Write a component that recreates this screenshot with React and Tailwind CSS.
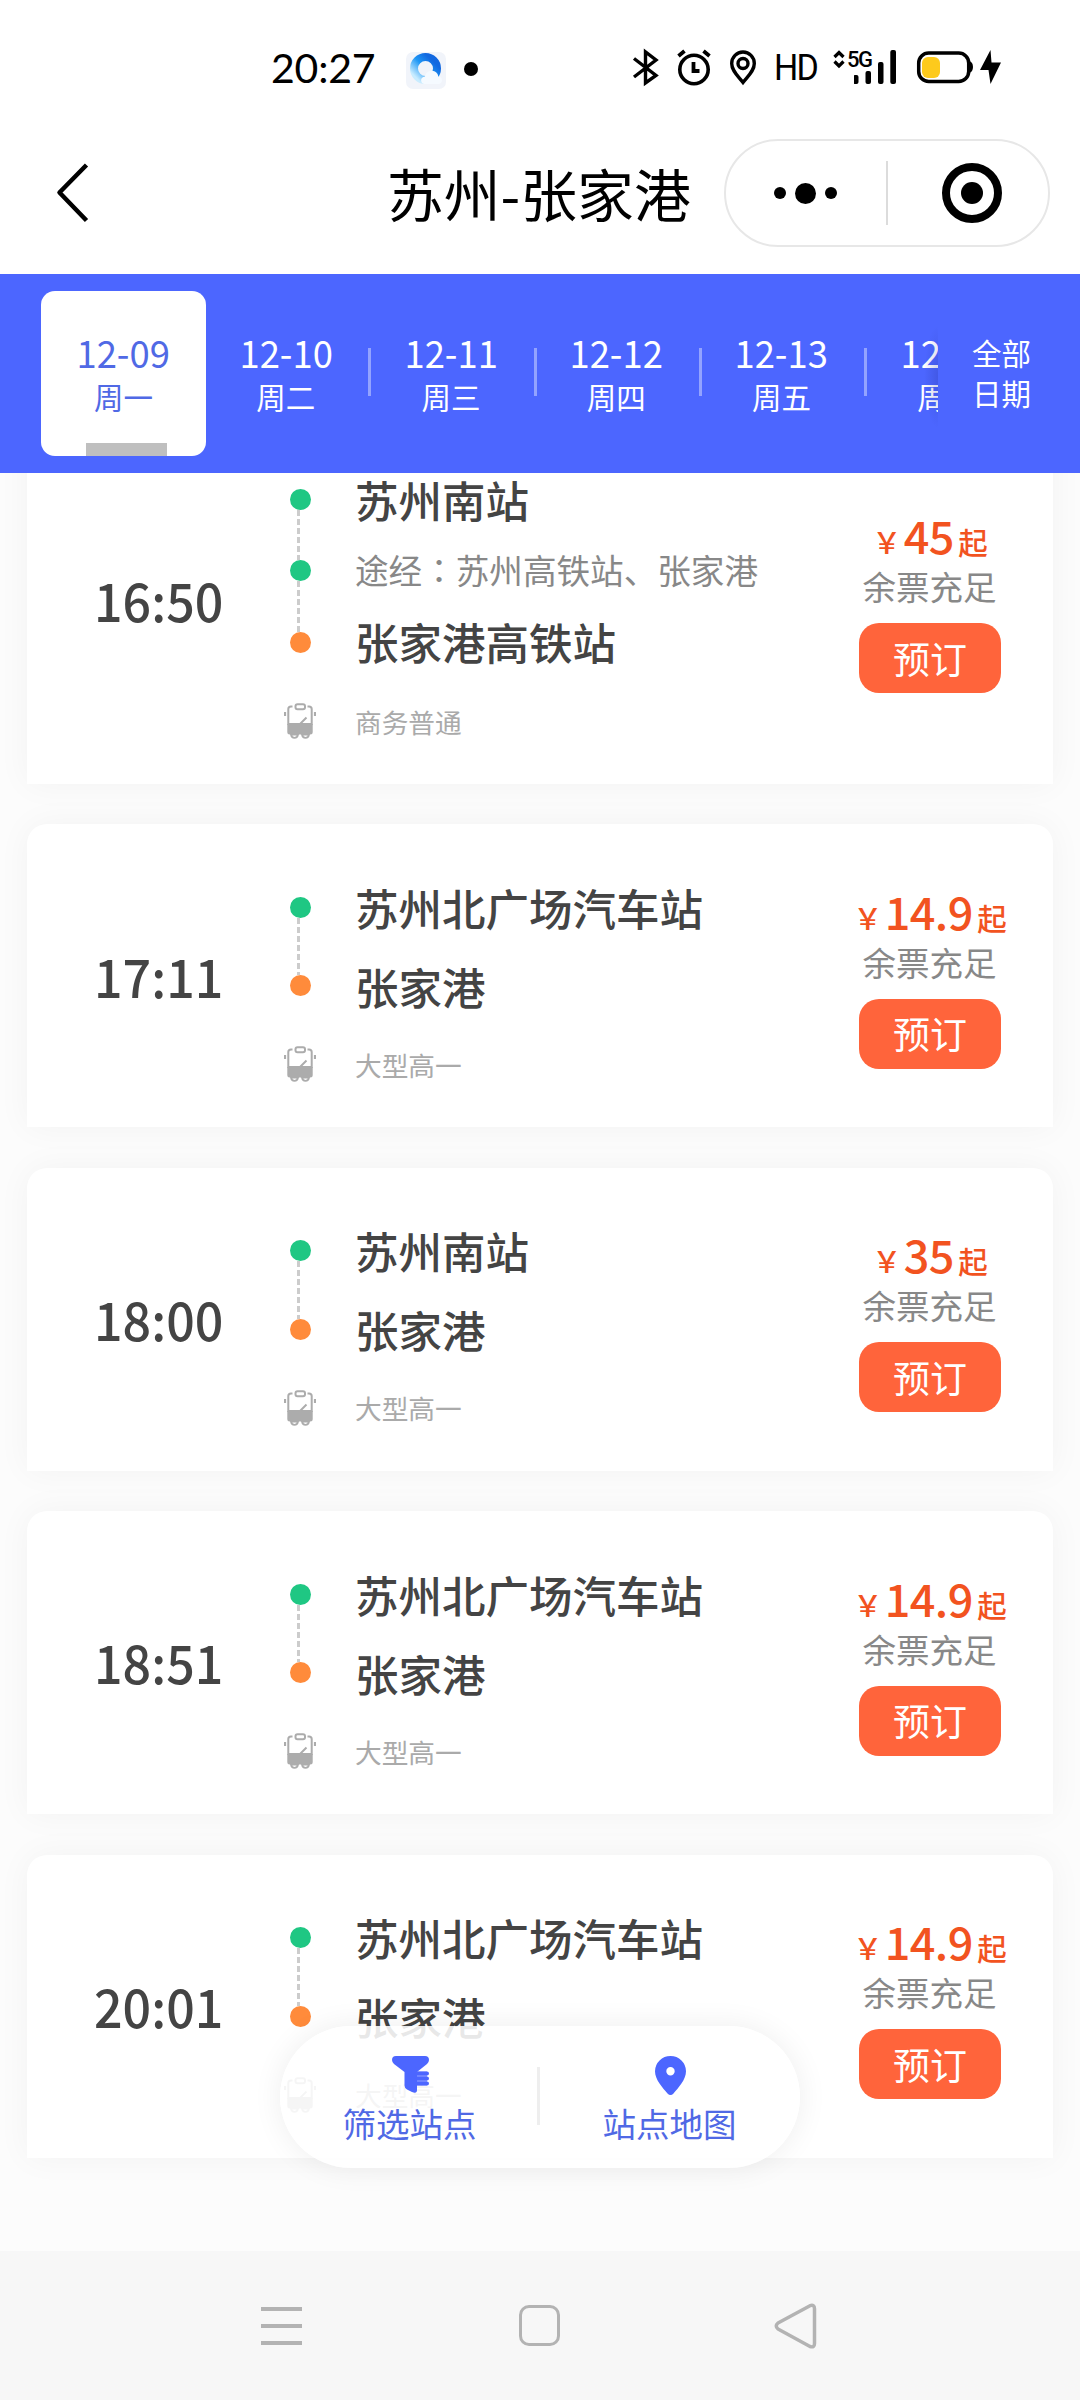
const DATES = [
  ['12-10', '周二'],
  ['12-11', '周三'],
  ['12-12', '周四'],
  ['12-13', '周五'],
  ['12-14', '周六'],
];

const TRIPS = [
  { time: '16:50', from: '苏州南站', via: '苏州高铁站、张家港', to: '张家港高铁站', type: '商务普通', price: '45' },
  { time: '17:11', from: '苏州北广场汽车站', to: '张家港', type: '大型高一', price: '14.9' },
  { time: '18:00', from: '苏州南站', to: '张家港', type: '大型高一', price: '35' },
  { time: '18:51', from: '苏州北广场汽车站', to: '张家港', type: '大型高一', price: '14.9' },
  { time: '20:01', from: '苏州北广场汽车站', to: '张家港', type: '大型高一', price: '14.9' },
];

function StatusBar() {
  return (
    <div className="flex h-[136px] shrink-0 items-center pl-[271px]">
      <span className="w-[105px] whitespace-nowrap font-['Lato'] text-[41px] leading-[48px] tracking-[-0.2px] text-black">20:27</span>
      <svg className="ml-[30px] mt-[4px]" width="40" height="37" viewBox="0 0 40 37">
        <defs>
          <linearGradient id="ring" x1="1" y1="0" x2="0.1" y2="0.9">
            <stop offset="0.2" stopColor="#1268e0" />
            <stop offset="0.55" stopColor="#1e97f5" />
            <stop offset="1" stopColor="#c8ecff" />
          </linearGradient>
        </defs>
        <rect width="40" height="37" rx="7" fill="#f1f4fa" />
        <circle cx="19.500" cy="16.500" r="11.500" fill="none" stroke="url(#ring)" strokeWidth="8" />
        <path d="M18 32c-4-1-4-7 1-7.500 1-6 9-8 12.500-2.500.5 1 .7 1.500.7 2.500 5 0 5 7.500 0 7.500z" fill="#f5faff" />
      </svg>
      <span className="ml-[18px] mt-[1px] h-[14px] w-[14px] rounded-full bg-black" />
      <svg className="ml-[154px]" width="28" height="40" viewBox="0 0 28 40" fill="none" stroke="#000" strokeWidth="3.400">
        <path d="M2 10.500 24 27.500 13.500 35V4L24 12 2 29" />
      </svg>
      <svg className="ml-[17px]" width="34" height="40" viewBox="0 0 34 40" fill="none" stroke="#000">
        <circle cx="17" cy="21.500" r="14.200" strokeWidth="3.600" />
        <path d="M1.500 8 7.500 3M26.500 3l6 5" strokeWidth="3.800" />
        <path d="M16.500 14v9h6" strokeWidth="3.800" />
      </svg>
      <svg className="ml-[18px]" width="28" height="40" viewBox="0 0 28 40" fill="none" stroke="#000" strokeWidth="3.400">
        <path d="M14 34.500C9 28 2.700 23 2.700 15.500a11.300 11.500 0 0 1 22.600 0C25.300 23 19 28 14 34.500z" />
        <circle cx="14" cy="15.500" r="5" />
      </svg>
      <span className="ml-[17px] w-[50px] origin-left scale-x-[.92] font-['Roboto'] text-[37px] leading-[40px] tracking-[-2px] text-black">HD</span>
      <svg className="ml-[9px]" width="12" height="40" viewBox="0 0 12 40" fill="none" stroke="#000" strokeWidth="3.200">
        <path d="M1.500 9 6 4.500 10.500 9M1.500 13.500 6 18l4.500-4.500" />
      </svg>
      <div className="relative ml-[9px] h-[40px] w-[44px]">
        <span className="absolute -left-[7px] top-[1px] font-['Roboto'] text-[22px] font-medium leading-[22px] tracking-[-1.500px] text-black">5G</span>
        <svg width="44" height="40" viewBox="0 0 44 40">
          <rect x="-1" y="27" width="5.500" height="9" rx="2" />
          <rect x="11.500" y="23" width="5.500" height="13" rx="2" />
          <rect x="24" y="14" width="5.500" height="22" rx="2" />
          <rect x="36.300" y="2" width="5.700" height="34" rx="2" />
        </svg>
      </div>
      <svg className="ml-[17px]" width="60" height="40" viewBox="0 0 60 40">
        <rect x="3.700" y="5" width="50" height="28.500" rx="10" fill="none" stroke="#000" strokeWidth="3.500" />
        <rect x="7" y="9" width="18" height="21" rx="6" fill="#fdca1c" />
        <path d="M54 13q4 1 4 6t-4 6z" />
      </svg>
      <svg className="ml-[4px]" width="22" height="40" viewBox="0 0 22 40">
        <path d="M11.500 2 1 22h8.500l2 14L22 14.500h-9.500z" />
      </svg>
    </div>
  );
}

function TitleBar() {
  return (
    <div className="flex h-[138px] shrink-0 items-start pt-[3px]">
      <svg className="ml-[54px] mt-[22px]" width="38" height="64" viewBox="0 0 38 64" fill="none" stroke="#000" strokeWidth="4.500">
        <path d="M32.500 4 5.500 31.500l27 28" strokeLinejoin="round" />
      </svg>
      <h1 className="ml-[295px] mt-[13px] w-[337px] whitespace-nowrap text-[56.8px] leading-[80px] text-black">苏州-张家港</h1>
      <div className="flex h-[108px] w-[326px] items-center rounded-full border-2 border-[#e7e7e7]">
        <div className="flex w-[160px] items-center justify-center gap-[9px] pr-[2px]">
          <span className="h-[12px] w-[12px] rounded-full bg-black" />
          <span className="h-[21px] w-[21px] rounded-full bg-black" />
          <span className="h-[12px] w-[12px] rounded-full bg-black" />
        </div>
        <span className="h-[64px] w-[2px] bg-[#dcdcdc]" />
        <div className="flex flex-1 items-center justify-center pl-[7px]">
          <span className="flex h-[60px] w-[60px] items-center justify-center rounded-full border-[8px] border-black">
            <span className="h-[22px] w-[22px] rounded-full bg-black" />
          </span>
        </div>
      </div>
    </div>
  );
}

function DateBar() {
  return (
    <div className="flex h-[199px] shrink-0 items-center bg-[#4c66ff] pl-[41px] text-white">
      <div className="flex h-[165px] w-[897px] overflow-hidden">
        <div className="relative flex w-[165px] shrink-0 flex-col items-center rounded-[14px] bg-white pt-[36px] text-[#5069e5]">
          <span className="scale-x-[.97] text-[37.5px] leading-[49px]">12-09</span>
          <span className="text-[29.5px] leading-[40px]">周一</span>
          <span className="absolute bottom-0 left-[45px] h-[13px] w-[81px] bg-[#bfbfbf]" />
        </div>
        {DATES.map(([date, day]) => (
          <div key={date} className="flex w-[165.3px] shrink-0 items-center">
            <div className="flex h-full flex-1 flex-col items-center pr-[3px] pt-[36px]">
              <span className="scale-x-[.97] text-[37.5px] leading-[49px]">{date}</span>
              <span className="text-[29.5px] leading-[40px]">{day}</span>
            </div>
            <span className="-mt-[4px] h-[48px] w-[3px] bg-white/40" />
          </div>
        ))}
      </div>
      <div className="relative flex-1">
        <span className="absolute -left-[14px] top-[-10px] h-[104px] w-[14px] bg-[radial-gradient(ellipse_at_right,rgba(30,40,140,0.22),transparent_70%)]" />
        <div className="-mt-[3px] pl-[34px] text-[29.5px] leading-[40px]">
          <div>全部</div>
          <div>日期</div>
        </div>
      </div>
    </div>
  );
}

function BusIcon() {
  return (
    <svg className="shrink-0" width="32" height="36" viewBox="0 0 32 36" fill="none" stroke="#acacac" strokeWidth="2">
      <path d="M8.500 3.500H7Q4.300 3.500 4.300 6v15h23.400V6q0-2.500-2.700-2.500h-1.500" />
      <rect x="11.500" y="1.200" width="9.500" height="5" rx="2" />
      <path d="M1 9v4M31 9v4" strokeWidth="2.200" />
      <path d="m16 21 6.500-6.500" />
      <path d="M3.300 21h25.400v8q0 2.500-2.500 2.500H5.800q-2.500 0-2.500-2.500z" fill="#acacac" stroke="none" />
      <path d="M7 31.500q.5 3.300 3.500 3.300t3.500-3.300zM18 31.500q.5 3.300 3.500 3.300t3.500-3.300z" fill="#fff" strokeWidth="1.800" />
    </svg>
  );
}

const dash = 'bg-[repeating-linear-gradient(to_bottom,#ccc_0_6px,transparent_6px_9px)]';

function Timeline({ via }) {
  return (
    <div className="flex w-[36px] shrink-0 flex-col items-center pt-[72.5px]">
      <span className="h-[21px] w-[21px] shrink-0 rounded-full bg-[#1fc783]" />
      <span className={'mr-[4px] w-[3px] shrink-0 ' + dash + (via ? ' h-[50.5px]' : ' h-[57.5px]')} />
      {via && <span className="h-[21px] w-[21px] shrink-0 rounded-full bg-[#1fc783]" />}
      {via && <span className={'mr-[4px] h-[50.5px] w-[3px] shrink-0 ' + dash} />}
      <span className="mb-[50px] h-[21px] w-[21px] shrink-0 rounded-full bg-[#ff8b3b]" />
      <BusIcon />
    </div>
  );
}

function TripCard({ trip }) {
  const rowHeight = trip.via ? 'h-[71px]' : 'h-[79px]';
  const row = 'flex items-center whitespace-nowrap ' + rowHeight;
  return (
    <div className={'flex w-full shrink-0 rounded-t-[20px] bg-white shadow-[0_0_34px_rgba(0,0,0,0.045)] ' + (trip.via ? 'h-[368px]' : 'h-[303px]')}>
      <div className="flex w-[255px] items-center justify-center pb-[2px] pl-[8px] text-[52.5px] font-medium text-[#444]">
        <span className="scale-x-[.955]">{trip.time}</span>
      </div>
      <Timeline via={trip.via} />
      <div className={'flex flex-1 flex-col pl-[37px] ' + (trip.via ? 'pt-[48px]' : 'pt-[43.5px]')}>
        <div className={row + ' text-[43.5px] font-medium text-[#444]'}>{trip.from}</div>
        {trip.via && (
          <div className={row + ' text-[33.6px] text-[#888]'}>
            途经<span className="font-['Noto_Sans_CJK_JP']">：</span>
            {trip.via}
          </div>
        )}
        <div className={row + ' text-[43.5px] font-medium text-[#444]'}>{trip.to}</div>
        <div className={'flex h-[76px] items-center text-[26.7px] text-[#aaa] ' + (trip.via ? 'mt-[7px]' : 'mt-[1px]')}>{trip.type}</div>
      </div>
      <div className="flex w-[246px] shrink-0 flex-col items-center justify-center pt-[1px]">
        <div className="flex h-[54px] items-baseline whitespace-nowrap font-medium leading-[54px] text-[#f2531f]">
          <span className="text-[29px]">￥</span>
          <span className="mx-[2.5px] text-[45px] leading-[54px] tracking-[-0.6px]">{trip.price}</span>
          <span className="ml-[2px] text-[29.5px]">起</span>
        </div>
        <div className="-ml-[1px] text-[33.5px] leading-[48px] text-[#888]">余票充足</div>
        <button className="mt-[13px] h-[70px] w-[142px] rounded-[20px] bg-[#ff643b] text-[37px] leading-[67px] text-white">预订</button>
      </div>
    </div>
  );
}

function FloatingActions() {
  return (
    <div className="absolute left-[280px] top-[2026px] flex h-[142px] w-[520px] items-center rounded-full bg-white/[.88] text-[33.5px] leading-[46px] text-[#5069e5] shadow-[0_0_30px_rgba(0,0,0,0.07)]">
      <div className="flex flex-1 flex-col items-center pt-[7px]">
        <svg className="mb-[6px] ml-[2px]" width="38" height="38" viewBox="0 0 38 38" fill="#4c66ff">
          <path d="M4 0h29q4 0 4 4 0 2-2 4L25 16v18q0 4-5 2l-5-2.500q-2.500-1.500-2.500-4V16L2 8Q0 6 0 4 0 0 4 0z" />
          <rect x="23" y="15.500" width="14" height="4" rx="2" />
          <rect x="23" y="20.500" width="14" height="4" rx="2" />
          <rect x="23" y="25.500" width="14" height="4" rx="2" />
          <path d="M25 15.500h10v14H25z" fillOpacity=".6" />
        </svg>
        <span>筛选站点</span>
      </div>
      <span className="-mt-[3px] -ml-[2px] h-[58px] w-[3px] bg-[#eee]" />
      <div className="flex flex-1 flex-col items-center pr-[1px] pt-[7px]">
        <svg className="mb-[5px] ml-[2px]" width="31" height="39" viewBox="0 0 31 39" fill="#4c66ff">
          <path fillRule="evenodd" d="M15.500 0A15.500 15.300 0 0 0 0 15.300C0 24 8 32 12.500 37.500q3 3 6 0C23 32 31 24 31 15.300A15.500 15.300 0 0 0 15.500 0zm0 11a4.200 4.200 0 1 1 0 8.400 4.200 4.200 0 0 1 0-8.400z" />
        </svg>
        <span>站点地图</span>
      </div>
    </div>
  );
}

function NavBar() {
  return (
    <div className="flex h-[149px] shrink-0 items-center bg-[#f7f7f7] pl-[261px]">
      <div className="flex w-[41px] flex-col gap-[13px]">
        <span className="h-[4px] bg-[#b3b3b3]" />
        <span className="h-[4px] bg-[#b3b3b3]" />
        <span className="h-[4px] bg-[#b3b3b3]" />
      </div>
      <span className="ml-[217px] h-[41px] w-[41px] rounded-[10px] border-[3.5px] border-[#b3b3b3]" />
      <svg className="ml-[213px]" width="44" height="46" viewBox="0 0 44 46" fill="none" stroke="#b3b3b3" strokeWidth="3.500" strokeLinejoin="round">
        <path d="M37 2.700 5 20q-3.500 3 0 6l32 17.500q4.500 1.500 4.500-3V5.700q0-4.500-4.500-3z" />
      </svg>
    </div>
  );
}

export default function App() {
  return (
    <div className="relative flex h-[2400px] w-[1080px] flex-col overflow-hidden bg-white font-['Noto_Sans_CJK_SC',sans-serif]">
      <StatusBar />
      <TitleBar />
      <DateBar />
      <div className="flex-1 overflow-hidden bg-[#fcfcfc] px-[27px]">
        <div className="-mt-[57px] flex flex-col gap-[40.4px]">
          {TRIPS.map((trip) => (
            <TripCard key={trip.time} trip={trip} />
          ))}
        </div>
      </div>
      <FloatingActions />
      <NavBar />
    </div>
  );
}
